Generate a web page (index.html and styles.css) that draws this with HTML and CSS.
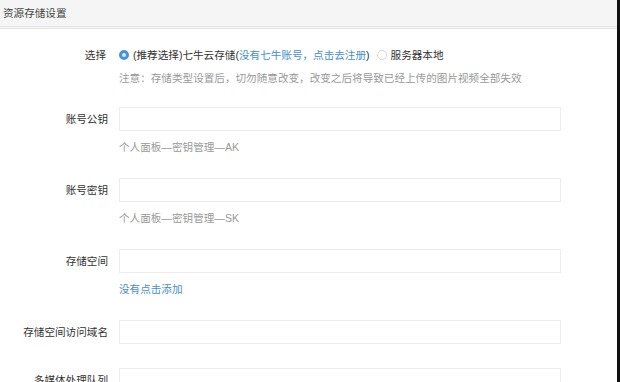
FILE: index.html
```html
<!DOCTYPE html>
<html lang="zh-CN">
<head>
  <meta charset="UTF-8" />
  <meta name="viewport" content="width=device-width, initial-scale=1" />
  <title>资源存储设置</title>
  <link rel="stylesheet" href="styles.css">
</head>
<body>

  <div class="page">
    <div class="panel-heading">资源存储设置</div>

    <form class="settings-form">

      <!-- 存储方式 -->
      <div class="form-group choice">
        <label class="control-label">选择</label>
        <div class="controls">
          <div class="radio-line">
            <label class="radio">
              <input type="radio" name="storage" value="qiniu" checked>
              <span>(推荐选择)七牛云存储(<a href="#" class="link">没有七牛账号，点击去注册</a>)</span>
            </label>
            <label class="radio">
              <input type="radio" name="storage" value="local">
              <span>服务器本地</span>
            </label>
          </div>
          <p class="help note">注意：存储类型设置后，切勿随意改变，改变之后将导致已经上传的图片视频全部失效</p>
        </div>
      </div>

      <div class="form-group">
        <label class="control-label" for="ak">账号公钥</label>
        <div class="controls">
          <input type="text" id="ak" class="form-input">
          <p class="help">个人面板—密钥管理—AK</p>
        </div>
      </div>

      <div class="form-group">
        <label class="control-label" for="sk">账号密钥</label>
        <div class="controls">
          <input type="text" id="sk" class="form-input">
          <p class="help">个人面板—密钥管理—SK</p>
        </div>
      </div>

      <div class="form-group">
        <label class="control-label" for="bucket">存储空间</label>
        <div class="controls">
          <input type="text" id="bucket" class="form-input">
          <p class="help"><a href="#" class="link">没有点击添加</a></p>
        </div>
      </div>

      <div class="form-group">
        <label class="control-label" for="domain">存储空间访问域名</label>
        <div class="controls">
          <input type="text" id="domain" class="form-input">
        </div>
      </div>

      <div class="form-group">
        <label class="control-label" for="pipeline">多媒体处理队列</label>
        <div class="controls">
          <input type="text" id="pipeline" class="form-input">
        </div>
      </div>

    </form>
  </div>

</body>
</html>
```

FILE: styles.css
```css
/* Reset */
* {
  margin: 0;
  padding: 0;
  box-sizing: border-box;
}

body {
  font-family: "Liberation Sans", "Noto Sans CJK SC", sans-serif;
  font-size: 10.6px;
  color: #333;
  background: #fff;
  overflow: hidden;
}

.page {
  height: 382px;
  border-right: 3px solid #111;
}

/* 标题栏 */
.panel-heading {
  height: 29px;
  line-height: 27px;
  padding-left: 3px;
  background: #f5f5f5;
  border-bottom: 3px double #e6e6e6;
  color: #444;
}

/* 表单 */
.settings-form {
  padding-top: 17px;
}

.form-group {
  display: flex;
  align-items: flex-start;
  margin-bottom: 24px;
}

.control-label {
  width: 108px;
  height: 24px;
  flex-shrink: 0;
  text-align: right;
  line-height: 25px;
  color: #333;
}

.controls {
  width: 442px;
  margin-left: 11px;
}

.choice {
  margin-bottom: 20px;
}

.choice .control-label {
  height: auto;
  line-height: 18px;
  padding-right: 2px;
}

.radio-line {
  display: flex;
  line-height: 18px;
}

.radio {
  display: flex;
  align-items: center;
  margin-right: 7px;
  cursor: pointer;
}

.radio input {
  appearance: none;
  -webkit-appearance: none;
  width: 10px;
  height: 10px;
  border-radius: 50%;
  border: 1px solid #d6d6d6;
  background: #fff;
  margin: 0 4px 0 0;
}

.radio input:checked {
  border: 3px solid #4b94d4;
  background: #d9e8f6;
}

.help {
  margin-top: 7px;
  margin-bottom: -2px;
  line-height: 18px;
  color: #999;
}

.help.note {
  margin-top: 5px;
  margin-bottom: 0;
}

.link {
  color: #4b8fc9;
  text-decoration: none;
}

.form-input {
  display: block;
  width: 100%;
  height: 24px;
  border: 1px solid #ededed;
  background: #fff;
  outline: none;
  padding: 0 6px;
  font: inherit;
}
```
